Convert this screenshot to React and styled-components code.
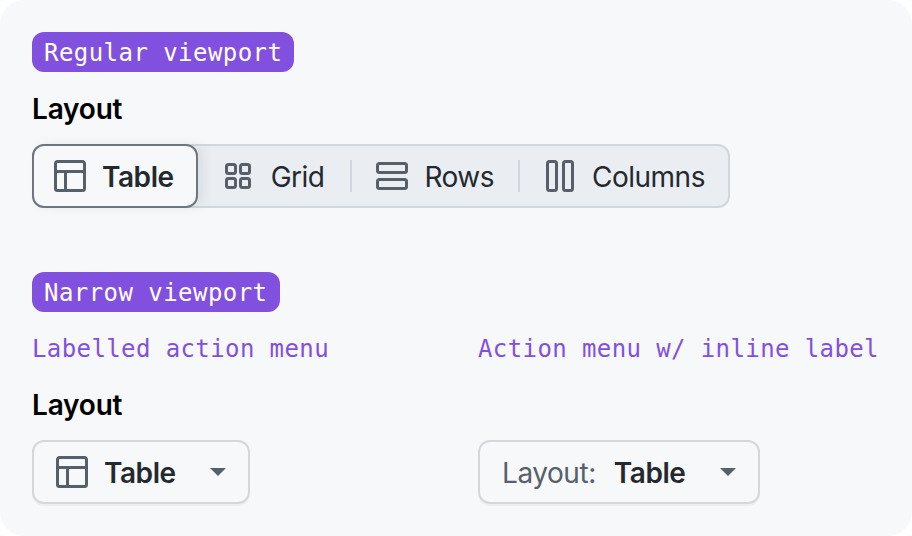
import React from "react";
import styled, { createGlobalStyle } from "styled-components";

const GlobalStyle = createGlobalStyle`
  html, body {
    margin: 0;
    background: #ffffff;
  }
`;

const Panel = styled.div`
  box-sizing: border-box;
  width: 912px;
  height: 536px;
  padding: 32px;
  border-radius: 24px;
  background: #f6f8fa;
  font-family: Inter, "Liberation Sans", sans-serif;
  color: #24292f;
`;

const Badge = styled.div`
  display: inline-block;
  vertical-align: top;
  height: 40px;
  padding: 0 12px;
  border-radius: 12px;
  background: #8250df;
  color: #ffffff;
  font-family: "DejaVu Sans Mono", monospace;
  font-size: 24px;
  letter-spacing: 0.45px;
  line-height: 42px;
`;

const BadgeRow = styled.div`
  display: flex;
  height: 40px;
  margin-top: ${(p) => p.$top || 0}px;
`;

const FieldLabel = styled.div`
  margin-top: 16px;
  height: 40px;
  font-size: 28px;
  font-weight: 600;
  letter-spacing: -0.2px;
  line-height: 42px;
  color: #000000;
`;

const Segmented = styled.div`
  display: inline-flex;
  align-items: center;
  box-sizing: border-box;
  height: 64px;
  margin-top: 16px;
  border: 2px solid #d0d7de;
  border-radius: 12px;
  background: #eaeef2;
`;

const Segment = styled.div`
  display: flex;
  align-items: center;
  gap: ${(p) => p.$gap || 16}px;
  padding: 0 ${(p) => p.$right || 24}px 0 24px;
  font-size: 28px;
  letter-spacing: -0.5px;
  line-height: 34px;
`;

const SelectedSegment = styled.div`
  display: flex;
  align-items: center;
  gap: 16px;
  box-sizing: border-box;
  height: 64px;
  margin: -2px 0 -2px -2px;
  padding: 0 22px 0 20px;
  border: 2px solid #6e7781;
  border-radius: 12px;
  background: #f6f8fa;
  font-size: 28px;
  font-weight: 600;
  letter-spacing: -0.45px;
  line-height: 34px;
  box-shadow: 6px 0 10px rgba(140, 149, 159, 0.15);
`;

const ItemText = styled.span`
  padding-top: 2px;
`;

const Divider = styled.div`
  width: 2px;
  height: 32px;
  background: #d0d7de;
`;

const Columns = styled.div`
  display: grid;
  grid-template-columns: 446px 1fr;
`;

const Caption = styled.div`
  margin-top: 16px;
  height: 40px;
  color: #8250df;
  font-family: "DejaVu Sans Mono", monospace;
  font-size: 24px;
  letter-spacing: 0.4px;
  line-height: 42px;
`;

const MenuButton = styled.div`
  display: inline-flex;
  align-items: center;
  box-sizing: border-box;
  height: 64px;
  margin-top: 16px;
  padding: 0 22px;
  border: 2px solid #d5d8da;
  border-radius: 12px;
  background: #f6f8fa;
  box-shadow: 0 2px 0 rgba(27, 31, 36, 0.04);
  font-size: 28px;
  letter-spacing: -0.45px;
  line-height: 34px;
`;

const MenuValue = styled.span`
  margin-left: ${(p) => p.$left}px;
  padding-top: 2px;
  font-weight: 600;
`;

const InlineLabel = styled.span`
  padding-top: 2px;
  color: #57606a;
`;

const Caret = styled.span`
  width: 0;
  height: 0;
  margin-left: ${(p) => p.$left}px;
  border-top: 8px solid #57606a;
  border-left: 8px solid transparent;
  border-right: 8px solid transparent;
`;

const Icon = styled.svg`
  flex: none;
  width: 32px;
  height: 32px;
  color: #57606a;
  fill: currentColor;
`;

const OutlineIcon = styled(Icon)`
  fill: none;
  stroke: currentColor;
  stroke-width: 3;
`;

const TableIcon = () => (
  <Icon viewBox="0 0 16 16">
    <path d="M0 1.75C0 .784.784 0 1.75 0h12.5C15.216 0 16 .784 16 1.75v12.5A1.75 1.75 0 0 1 14.25 16H1.75A1.75 1.75 0 0 1 0 14.25ZM6.5 6.5v8h7.75a.25.25 0 0 0 .25-.25V6.5Zm8-1.5V1.75a.25.25 0 0 0-.25-.25H1.75a.25.25 0 0 0-.25.25V5Zm-13 1.5v7.75c0 .138.112.25.25.25H5v-8Z" />
  </Icon>
);

const GridIcon = () => (
  <OutlineIcon viewBox="0 0 32 32">
    <rect x="4.5" y="4.5" width="9" height="9" rx="2" />
    <rect x="18.5" y="4.5" width="9" height="9" rx="2" />
    <rect x="4.5" y="18.5" width="9" height="9" rx="2" />
    <rect x="18.5" y="18.5" width="9" height="9" rx="2" />
  </OutlineIcon>
);

const RowsIcon = () => (
  <OutlineIcon viewBox="0 0 32 32">
    <rect x="1.5" y="3.5" width="29" height="9" rx="2" />
    <rect x="1.5" y="19.5" width="29" height="9" rx="2" />
  </OutlineIcon>
);

const ColumnsIcon = () => (
  <OutlineIcon viewBox="0 0 32 32">
    <rect x="3.5" y="1.5" width="9" height="29" rx="2" />
    <rect x="19.5" y="1.5" width="9" height="29" rx="2" />
  </OutlineIcon>
);

export default function App() {
  return (
    <>
      <GlobalStyle />
      <Panel>
        <BadgeRow>
          <Badge>Regular viewport</Badge>
        </BadgeRow>
        <FieldLabel>Layout</FieldLabel>
        <Segmented>
          <SelectedSegment>
            <TableIcon />
            <ItemText>Table</ItemText>
          </SelectedSegment>
          <Segment $gap={17} $right={26}>
            <GridIcon />
            <ItemText>Grid</ItemText>
          </Segment>
          <Divider />
          <Segment $right={24}>
            <RowsIcon />
            <ItemText>Rows</ItemText>
          </Segment>
          <Divider />
          <Segment $right={23}>
            <ColumnsIcon />
            <ItemText>Columns</ItemText>
          </Segment>
        </Segmented>
        <BadgeRow $top={64}>
          <Badge>Narrow viewport</Badge>
        </BadgeRow>
        <Columns>
          <div>
            <Caption>Labelled action menu</Caption>
            <FieldLabel>Layout</FieldLabel>
            <MenuButton>
              <TableIcon />
              <MenuValue $left={16}>Table</MenuValue>
              <Caret $left={34} />
            </MenuButton>
          </div>
          <div>
            <Caption>Action menu w/ inline label</Caption>
            <FieldLabel />
            <MenuButton>
              <InlineLabel>Layout:</InlineLabel>
              <MenuValue $left={18}>Table</MenuValue>
              <Caret $left={35} />
            </MenuButton>
          </div>
        </Columns>
      </Panel>
    </>
  );
}
